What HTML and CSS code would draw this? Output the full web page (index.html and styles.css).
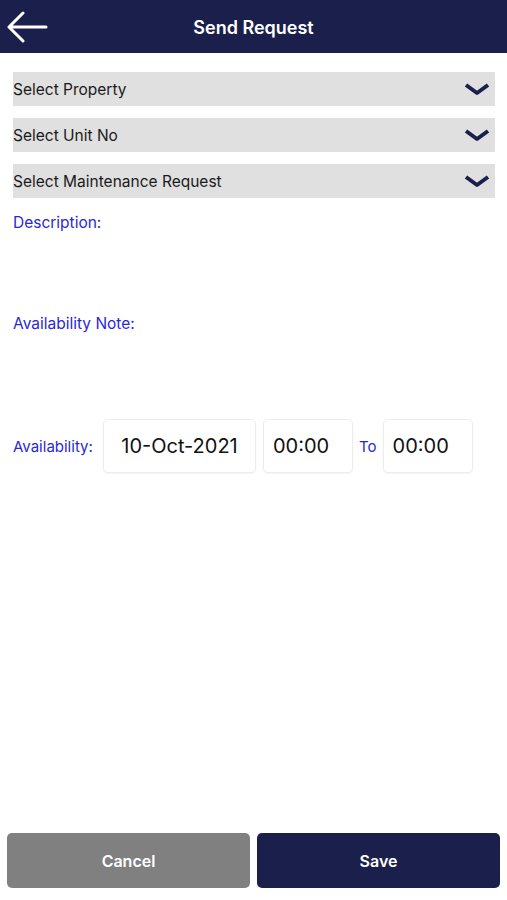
FILE: index.html
```html
<!DOCTYPE html>
<html lang="en">
<head>
  <meta charset="UTF-8" />
  <title>Send Request</title>
  <link rel="stylesheet" href="styles.css">
</head>
<body>
  <div class="screen">
    <header class="topbar">
      <button class="back" aria-label="Back">
        <svg width="42" height="32" viewBox="0 0 42 32">
          <path d="M40 16H3M17 2L3 16l14 14" fill="none" stroke="#fff" stroke-width="3" stroke-linecap="round" stroke-linejoin="round"/>
        </svg>
      </button>
      <h1>Send Request</h1>
    </header>

    <main class="form">
      <div class="select">
        <span>Select Property</span>
        <svg class="chev" width="26" height="14" viewBox="0 0 26 14"><path d="M2 3l11 8 11-8" fill="none" stroke="#1b1f4b" stroke-width="4" stroke-linejoin="round"/></svg>
      </div>
      <div class="select">
        <span>Select Unit No</span>
        <svg class="chev" width="26" height="14" viewBox="0 0 26 14"><path d="M2 3l11 8 11-8" fill="none" stroke="#1b1f4b" stroke-width="4" stroke-linejoin="round"/></svg>
      </div>
      <div class="select">
        <span>Select Maintenance Request</span>
        <svg class="chev" width="26" height="14" viewBox="0 0 26 14"><path d="M2 3l11 8 11-8" fill="none" stroke="#1b1f4b" stroke-width="4" stroke-linejoin="round"/></svg>
      </div>

      <label class="field-label">Description:</label>
      <div class="textarea"></div>

      <label class="field-label">Availability Note:</label>
      <div class="textarea"></div>

      <div class="availability">
        <span class="avail-label">Availability:</span>
        <div class="box date">10-Oct-2021</div>
        <div class="box time">00:00</div>
        <span class="to">To</span>
        <div class="box time">00:00</div>
      </div>
    </main>

    <footer class="actions">
      <button class="btn cancel">Cancel</button>
      <button class="btn save">Save</button>
    </footer>
  </div>
</body>
</html>
```

FILE: styles.css
```css
body {
  margin: 0;
  font-family: Inter, "Liberation Sans", sans-serif;
  background: #fff;
}
.screen {
  display: flex;
  flex-direction: column;
  height: 900px;
}
.topbar {
  height: 53px;
  background: #1b1f4b;
  display: flex;
  align-items: center;
  justify-content: center;
  position: relative;
}
.topbar h1 {
  margin: 0;
  padding-top: 2px;
  color: #fff;
  font-size: 18px;
  font-weight: 600;
}
.back {
  position: absolute;
  left: 6px;
  top: 11px;
  background: none;
  border: 0;
  padding: 0;
  height: 32px;
}
.form {
  padding: 19px 12px 0 13px;
}
.select {
  height: 34px;
  background: #e0e0e0;
  display: flex;
  align-items: center;
  justify-content: space-between;
  margin-bottom: 12px;
  font-size: 15.5px;
  color: #1a1a1a;
}
.chev {
  margin-right: 5px;
}
.field-label {
  display: block;
  color: #2828d8;
  font-size: 15.5px;
  padding-top: 3px;
  height: 20px;
}
.textarea {
  height: 78px;
}
.availability {
  display: flex;
  align-items: center;
  margin-top: 7px;
}
.avail-label {
  color: #2828d8;
  font-size: 15px;
  width: 90px;
}
.box {
  height: 54px;
  box-sizing: border-box;
  border: 1px solid #ececec;
  border-radius: 5px;
  box-shadow: 0 1px 2px rgba(0, 0, 0, 0.06);
  display: flex;
  align-items: center;
  font-size: 20px;
  color: #111;
}
.date {
  width: 153px;
  justify-content: center;
  margin-right: 7px;
}
.time {
  width: 90px;
  padding-left: 9px;
}
.to {
  color: #2828d8;
  font-size: 15px;
  margin: 0 6px;
}
.actions {
  margin-top: auto;
  display: flex;
  gap: 7px;
  padding: 0 7px 12px;
}
.btn {
  flex: 1;
  height: 55px;
  border: 0;
  border-radius: 5px;
  color: #fff;
  font-family: Inter, "Liberation Sans", sans-serif;
  font-size: 16px;
  font-weight: 600;
}
.cancel {
  background: #808080;
}
.save {
  background: #1b1f4b;
}
```
